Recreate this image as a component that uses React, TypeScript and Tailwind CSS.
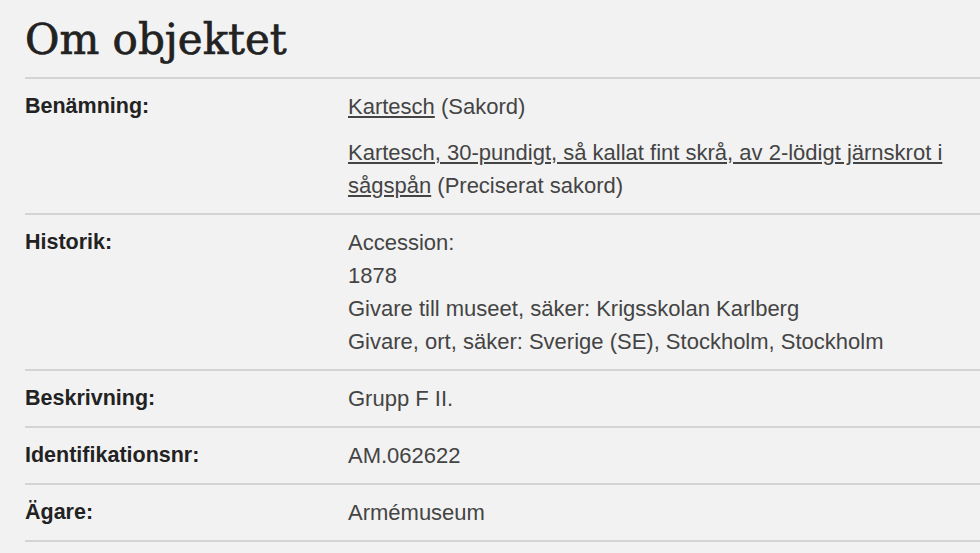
const rowClass = "flex border-b-2 border-[#d4d4d4] py-[11px]";

function Label({ children }: { children: React.ReactNode }) {
  return (
    <div className="w-[323px] shrink-0 text-[21.5px] font-bold text-[#222]">
      {children}
    </div>
  );
}

export default function App() {
  return (
    <main
      className="min-h-[553px] w-[980px] overflow-hidden bg-[#f2f2f2] pl-[25px] text-[22px] leading-[33px] text-[#444]"
      style={{ fontFamily: '"Liberation Sans", Arial, sans-serif' }}
    >
      <h1
        className="pt-[13px] pb-[10px] text-[42px] leading-[54px] text-[#222] [-webkit-text-stroke:0.7px_#222]"
        style={{ fontFamily: '"DejaVu Serif", serif' }}
      >
        Om objektet
      </h1>
      <div className="w-[1000px] border-t-2 border-[#d4d4d4]">
        {/* Benämning */}
        <div className={rowClass}>
          <Label>Benämning:</Label>
          <div className="w-[620px]">
            <p>
              <a href="#" className="underline underline-offset-2">
                Kartesch
              </a>{" "}
              (Sakord)
            </p>
            <p className="mt-[13px]">
              <a href="#" className="underline underline-offset-2">
                Kartesch, 30-pundigt, så kallat fint skrå, av 2-lödigt
                järnskrot i sågspån
              </a>{" "}
              (Preciserat sakord)
            </p>
          </div>
        </div>
        {/* Historik */}
        <div className={rowClass}>
          <Label>Historik:</Label>
          <div>
            <p>Accession:</p>
            <p>1878</p>
            <p>Givare till museet, säker: Krigsskolan Karlberg</p>
            <p>Givare, ort, säker: Sverige (SE), Stockholm, Stockholm</p>
          </div>
        </div>
        <div className={rowClass}>
          <Label>Beskrivning:</Label>
          <div>Grupp F II.</div>
        </div>
        <div className={rowClass}>
          <Label>Identifikationsnr:</Label>
          <div>AM.062622</div>
        </div>
        <div className={rowClass}>
          <Label>Ägare:</Label>
          <div>Armémuseum</div>
        </div>
      </div>
    </main>
  );
}
